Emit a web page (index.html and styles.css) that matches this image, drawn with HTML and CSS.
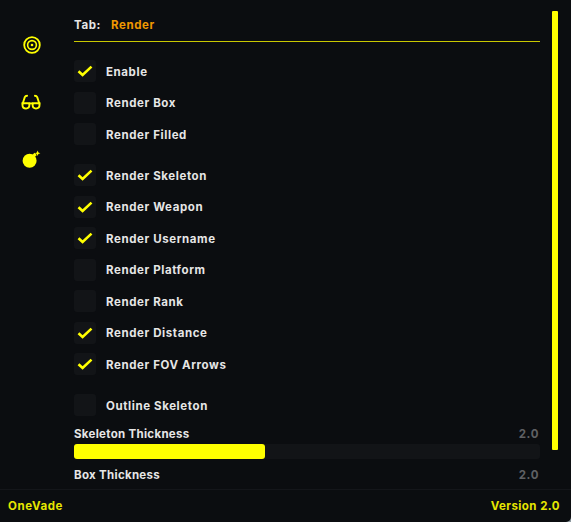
FILE: index.html
```html
<!DOCTYPE html>
<html lang="en">
<head>
<meta charset="utf-8">
<title>OneVade</title>
<link rel="stylesheet" href="styles.css">
</head>
<body>
<div class="window">
  <div class="main">
    <nav class="sidebar">
      <svg class="icon" viewBox="0 0 18 18" width="18" height="18"><circle cx="9" cy="9" r="7.8" fill="none" stroke="#ff0" stroke-width="1.8"/><circle cx="9" cy="9" r="4.4" fill="none" stroke="#ff0" stroke-width="1.6"/><circle cx="9" cy="9" r="1.3" fill="#ff0"/></svg>
      <svg class="icon glasses" viewBox="0 0 22 18" width="20" height="16"><g fill="none" stroke="#ff0" stroke-width="2.1" stroke-linecap="round"><path d="M1.6 11 L4 3.5 Q4.6 2 6.6 2"/><path d="M20.4 11 L18 3.5 Q17.4 2 15.4 2"/><path d="M1.4 10.4 H9.2 V12.5 Q9.2 16.4 5.4 16.4 Q1.4 16.4 1.4 12.5 Z"/><path d="M12.8 10.4 H20.6 V12.5 Q20.6 16.4 16.6 16.4 Q12.8 16.4 12.8 12.5 Z"/><path d="M9.2 11 Q11 10 12.8 11"/></g></svg>
      <svg class="icon" viewBox="0 0 19 18" width="19" height="18"><circle cx="7.6" cy="10.8" r="7" fill="#ff0"/><path d="M10.5 4.8 L12.5 2.8 L14.8 5 L12.8 7 Z" fill="#ff0"/><path d="M15.6 0.4 L16.4 2.4 L18.4 3.2 L16.4 4 L15.6 6 L14.8 4 L12.8 3.2 L14.8 2.4 Z" fill="#ff0"/></svg>
    </nav>
    <section class="content">
      <header class="tabbar">
        <span class="tab-label">Tab:</span>
        <span class="tab-name">Render</span>
      </header>
      <div class="group">
        <label class="row"><span class="box on"><svg viewBox="0 0 16 12" width="16" height="12"><path d="M1.5 6.2 L5.6 10 L14.5 1.6" fill="none" stroke="#ff0" stroke-width="2.6"/></svg></span><span class="text">Enable</span></label>
        <label class="row"><span class="box"></span><span class="text">Render Box</span></label>
        <label class="row"><span class="box"></span><span class="text">Render Filled</span></label>
      </div>
      <div class="group">
        <label class="row"><span class="box on"><svg viewBox="0 0 16 12" width="16" height="12"><path d="M1.5 6.2 L5.6 10 L14.5 1.6" fill="none" stroke="#ff0" stroke-width="2.6"/></svg></span><span class="text">Render Skeleton</span></label>
        <label class="row"><span class="box on"><svg viewBox="0 0 16 12" width="16" height="12"><path d="M1.5 6.2 L5.6 10 L14.5 1.6" fill="none" stroke="#ff0" stroke-width="2.6"/></svg></span><span class="text">Render Weapon</span></label>
        <label class="row"><span class="box on"><svg viewBox="0 0 16 12" width="16" height="12"><path d="M1.5 6.2 L5.6 10 L14.5 1.6" fill="none" stroke="#ff0" stroke-width="2.6"/></svg></span><span class="text">Render Username</span></label>
        <label class="row"><span class="box"></span><span class="text">Render Platform</span></label>
        <label class="row"><span class="box"></span><span class="text">Render Rank</span></label>
        <label class="row"><span class="box on"><svg viewBox="0 0 16 12" width="16" height="12"><path d="M1.5 6.2 L5.6 10 L14.5 1.6" fill="none" stroke="#ff0" stroke-width="2.6"/></svg></span><span class="text">Render Distance</span></label>
        <label class="row"><span class="box on"><svg viewBox="0 0 16 12" width="16" height="12"><path d="M1.5 6.2 L5.6 10 L14.5 1.6" fill="none" stroke="#ff0" stroke-width="2.6"/></svg></span><span class="text">Render FOV Arrows</span></label>
      </div>
      <div class="group">
        <label class="row"><span class="box"></span><span class="text">Outline Skeleton</span></label>
      </div>
      <div class="slider">
        <div class="slider-head"><span>Skeleton Thickness</span><span class="value">2.0</span></div>
        <div class="track"><div class="fill" style="width:40.9%"></div></div>
      </div>
      <div class="slider">
        <div class="slider-head"><span>Box Thickness</span><span class="value">2.0</span></div>
      </div>
    </section>
    <div class="scroll"><div class="thumb"></div></div>
  </div>
  <footer class="footer">
    <span>OneVade</span>
    <span class="version">Version 2.0</span>
  </footer>
</div>
</body>
</html>
```
FILE: styles.css
```css
* { box-sizing: border-box; }
html, body { margin: 0; height: 100%; background: #8f9aa0; }
body { font-family: "Inter", "Liberation Sans", sans-serif; font-weight: 700; font-size: 11.5px; letter-spacing: 0.6px; color: #e6e6e6; overflow: hidden; }
.window { width: 571px; height: 522px; display: flex; flex-direction: column; background: #0b0d10; border-bottom-right-radius: 5px; }
.main { height: 490px; display: flex; overflow: hidden; border-bottom: 1px solid #14161a; }
.sidebar { width: 74px; flex: none; display: flex; flex-direction: column; align-items: center; padding: 36px 11px 0 0; gap: 39px; }
.icon { display: block; flex: none; }
.glasses { margin: 1px 2px 1px 0; }
.content { width: 466px; flex: none; }
.tabbar { height: 42px; border-bottom: 1px solid #c8c800; padding-top: 18px; line-height: 14px; display: flex; gap: 10px; }
.tab-label { color: #e6e6e6; }
.tab-name { color: #ef9800; }
.group { display: flex; flex-direction: column; gap: 9.5px; margin-top: 18px; }
.group + .group { margin-top: 19px; }
.row { display: flex; align-items: center; gap: 10px; height: 22px; }
.text { padding-top: 1px; }
.box { width: 22px; height: 22px; border-radius: 3px; background: #121417; display: flex; align-items: center; justify-content: center; flex: none; }
.slider { margin-top: 11px; }
.slider-head { display: flex; justify-content: space-between; line-height: 14px; padding-right: 1px; letter-spacing: 0.3px; }
.slider + .slider { margin-top: 9px; }
.value { color: #5f6063; letter-spacing: 0.6px; }
.track { height: 15px; margin-top: 3px; border-radius: 3px; background: #121417; }
.fill { height: 100%; background: #ff0; border-radius: 3px; }
.scroll { flex: none; width: 31px; padding: 11px 0 0 12px; }
.thumb { width: 6px; height: 439px; background: #ff0; border-radius: 1px; }
.footer { flex: 1; display: flex; align-items: center; justify-content: space-between; padding: 0 11px 0 8px; color: #e6e600; }
.version { letter-spacing: 0.45px; }
```
